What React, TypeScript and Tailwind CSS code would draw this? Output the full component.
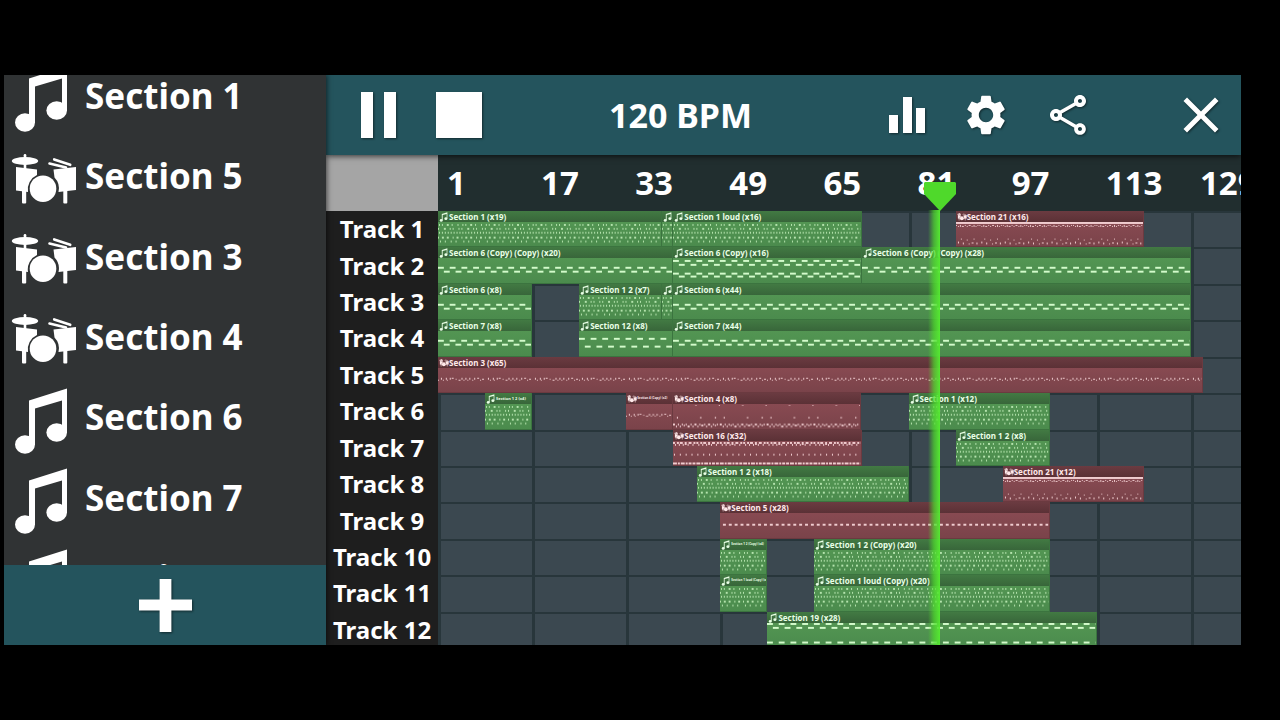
import React from 'react';
import { MdClose, MdOutlineShare, MdSettings } from 'react-icons/md';

type Kind = 'melody' | 'drums';

type PatternName =
  | 'arp'
  | 'bass'
  | 'double'
  | 'wide'
  | 'topline'
  | 'hats'
  | 'steady'
  | 'kick'
  | 'roll'
  | 'ride';

interface Section {
  name: string;
  kind: Kind;
}

interface Clip {
  start: number;
  length: number;
  label: string;
  pattern: PatternName;
  kind?: Kind;
  size?: string;
}

interface NotePattern {
  period: number;
  notes: number[][]; // [x, y, width, height]
}

// Number of two-bar steps that fit in the visible timeline
const VISIBLE_STEPS = 68.25;
// Note preview units per step
const STEP = 12;

const percent = (steps: number) => `${(steps / VISIBLE_STEPS) * 100}%`;

const sections: Section[] = [
  { name: 'Section 1', kind: 'melody' },
  { name: 'Section 5', kind: 'drums' },
  { name: 'Section 3', kind: 'drums' },
  { name: 'Section 4', kind: 'drums' },
  { name: 'Section 6', kind: 'melody' },
  { name: 'Section 7', kind: 'melody' },
  { name: 'Section 12', kind: 'melody' },
];

const bars = [1, 17, 33, 49, 65, 81, 97, 113, 129];

const patterns: Record<PatternName, NotePattern> = {
  arp: {
    period: 24,
    notes: [
      [1, 2, 1, 2], [4, 2, 1, 2], [9, 2, 2, 2], [14, 2, 1, 2], [20, 2, 1, 2],
      [0, 6, 1, 2], [6, 6, 2, 2], [12, 6, 1, 2], [15, 6, 1, 2], [21, 6, 1, 2],
      [1, 10, 1, 2], [4, 10, 1, 2], [7, 10, 1, 2], [10, 10, 1, 2], [13, 10, 1, 2], [16, 10, 1, 2], [19, 10, 1, 2], [22, 10, 1, 2],
      [0, 15, 1, 2], [4, 15, 2, 2], [9, 15, 2, 2], [15, 15, 1, 2], [19, 15, 2, 2],
      [2, 19, 1, 2], [7, 19, 1, 2], [13, 19, 1, 2], [18, 19, 1, 2],
    ],
  },
  bass: { period: 12, notes: [[0, 9, 6, 2], [6, 13, 6, 2]] },
  double: { period: 12, notes: [[0, 2, 6, 2], [6, 6, 6, 2], [0, 15, 6, 2], [6, 18, 6, 2]] },
  wide: { period: 12, notes: [[0, 7, 6, 2], [6, 15, 6, 2]] },
  topline: { period: 12, notes: [[0, 0, 6, 2], [6, 4, 6, 2], [0, 19, 6, 2]] },
  hats: {
    period: 48,
    notes: [
      [0, 12, 1, 1], [3, 10, 1, 2], [5, 12, 1, 1], [8, 10, 1, 2], [9, 12, 1, 1], [12, 10, 1, 2],
      [14, 10, 2, 1], [18, 11, 1, 1], [21, 12, 2, 1], [24, 10, 1, 2], [26, 12, 1, 1], [28, 10, 1, 2],
      [30, 12, 1, 1], [32, 10, 1, 2], [35, 12, 1, 1], [37, 10, 1, 2], [40, 10, 2, 1], [43, 12, 1, 1], [45, 11, 2, 1],
    ],
  },
  steady: { period: 6, notes: [[3, 11, 3, 2]] },
  kick: {
    period: 48,
    notes: [
      [23, 1, 1, 1], [47, 1, 1, 1], [4, 13, 1, 2], [28, 13, 1, 2], [43, 13, 1, 2],
      [0, 20, 2, 2], [3, 22, 1, 2], [5, 20, 1, 2], [7, 22, 1, 2], [9, 20, 1, 2], [11, 21, 1, 2], [13, 20, 1, 2],
      [15, 22, 2, 2], [18, 20, 1, 2], [20, 22, 1, 2], [22, 20, 2, 2], [25, 22, 1, 2], [27, 20, 1, 2], [29, 21, 2, 2],
      [32, 20, 1, 2], [34, 22, 1, 2], [36, 20, 2, 2], [39, 22, 1, 2], [41, 20, 1, 2], [43, 21, 1, 2], [45, 20, 1, 2],
    ],
  },
  roll: {
    period: 24,
    notes: [
      [0, 1, 2, 2], [2, 3, 1, 2], [4, 1, 2, 2], [6, 3, 1, 2], [7, 1, 3, 2], [10, 3, 1, 2], [12, 1, 2, 3],
      [15, 3, 1, 2], [16, 1, 3, 2], [20, 3, 1, 2], [21, 1, 2, 2],
      [1, 13, 1, 2], [7, 13, 1, 2], [13, 13, 1, 2], [19, 13, 1, 2],
      [0, 22, 4, 2], [5, 22, 2, 2], [8, 22, 4, 2], [13, 22, 2, 2], [16, 22, 3, 2], [20, 22, 3, 2],
    ],
  },
  ride: {
    period: 24,
    notes: [
      [0, 0, 24, 2], [0, 3, 1, 1], [2, 4, 1, 1], [4, 3, 1, 2], [6, 4, 2, 1], [9, 3, 1, 1], [11, 4, 1, 1],
      [13, 3, 2, 1], [16, 4, 1, 1], [18, 3, 1, 2], [20, 4, 1, 1], [22, 3, 1, 1],
      [2, 20, 1, 2], [5, 17, 1, 1], [7, 21, 1, 2], [11, 18, 1, 1], [13, 22, 1, 1], [16, 21, 2, 1], [18, 17, 1, 1], [21, 21, 1, 2],
    ],
  },
};

const tracks: Clip[][] = [
  [
    { start: 0, length: 19, label: 'Section 1 (x19)', pattern: 'arp' },
    { start: 19, length: 1, label: '', pattern: 'arp' },
    { start: 20, length: 16, label: 'Section 1 loud (x16)', pattern: 'arp' },
    { start: 44, length: 16, label: 'Section 21 (x16)', pattern: 'ride', kind: 'drums' },
  ],
  [
    { start: 0, length: 20, label: 'Section 6 (Copy) (Copy) (x20)', pattern: 'bass' },
    { start: 20, length: 16, label: 'Section 6 (Copy) (x16)', pattern: 'double' },
    { start: 36, length: 28, label: 'Section 6 (Copy) (Copy) (x28)', pattern: 'bass' },
  ],
  [
    { start: 0, length: 8, label: 'Section 6 (x8)', pattern: 'bass' },
    { start: 12, length: 7, label: 'Section 1 2 (x7)', pattern: 'arp' },
    { start: 19, length: 1, label: '', pattern: 'arp' },
    { start: 20, length: 44, label: 'Section 6 (x44)', pattern: 'bass' },
  ],
  [
    { start: 0, length: 8, label: 'Section 7 (x8)', pattern: 'bass' },
    { start: 12, length: 8, label: 'Section 12 (x8)', pattern: 'wide' },
    { start: 20, length: 44, label: 'Section 7 (x44)', pattern: 'bass' },
  ],
  [{ start: 0, length: 65, label: 'Section 3 (x65)', pattern: 'hats', kind: 'drums' }],
  [
    { start: 4, length: 4, label: 'Section 1 2 (x4)', pattern: 'arp', size: 'text-[4px]' },
    { start: 16, length: 4, label: 'Section 4 (Copy) (x2)', pattern: 'hats', kind: 'drums', size: 'text-[3px]' },
    { start: 20, length: 16, label: 'Section 4 (x8)', pattern: 'kick', kind: 'drums' },
    { start: 40, length: 12, label: 'Section 1 (x12)', pattern: 'arp' },
  ],
  [
    { start: 20, length: 16, label: 'Section 16 (x32)', pattern: 'roll', kind: 'drums' },
    { start: 44, length: 8, label: 'Section 1 2 (x8)', pattern: 'arp' },
  ],
  [
    { start: 22, length: 18, label: 'Section 1 2 (x18)', pattern: 'arp' },
    { start: 48, length: 12, label: 'Section 21 (x12)', pattern: 'ride', kind: 'drums' },
  ],
  [{ start: 24, length: 28, label: 'Section 5 (x28)', pattern: 'steady', kind: 'drums' }],
  [
    { start: 24, length: 4, label: 'Section 1 2 (Copy) (x4)', pattern: 'arp', size: 'text-[3px]' },
    { start: 32, length: 20, label: 'Section 1 2 (Copy) (x20)', pattern: 'arp' },
  ],
  [
    { start: 24, length: 4, label: 'Section 1 loud (Copy) (x4)', pattern: 'arp', size: 'text-[3px]' },
    { start: 32, length: 20, label: 'Section 1 loud (Copy) (x20)', pattern: 'arp' },
  ],
  [{ start: 28, length: 28, label: 'Section 19 (x28)', pattern: 'topline' }],
];

const NoteIcon: React.FC<{ className: string }> = ({ className }) => (
  <svg viewBox="0 0 68 72" className={className} fill="currentColor" aria-hidden="true">
    <path d="M19 18.5L57 6.5V51H52V18.5L25 26.5V63H19Z" />
    <ellipse cx="15" cy="62.5" rx="10" ry="9.2" />
    <ellipse cx="46.7" cy="50.5" rx="10.3" ry="9.2" />
  </svg>
);

const DrumsIcon: React.FC<{ className: string }> = ({ className }) => (
  <svg viewBox="0 0 68 72" className={className} fill="currentColor" aria-hidden="true">
    <ellipse cx="15" cy="20" rx="13.2" ry="3.9" />
    <rect x="13.7" y="13" width="2.6" height="16" rx="1.2" />
    <path d="M6 26L27 28.5V34A15.8 15.8 0 0 0 18 51L6 49.5Z" />
    <rect x="12" y="48" width="4.2" height="14.5" rx="1" />
    <circle cx="33" cy="47.7" r="13.3" />
    <path d="M43.5 28.5L66 26V49L48.5 51A15.8 15.8 0 0 0 44.5 36.5Z" />
    <rect x="53.3" y="48" width="4" height="14.5" rx="1" />
    <path d="M44.2 18.4L60.2 23.8M39.5 22.6L56 26.4" stroke="currentColor" strokeWidth="2.6" strokeLinecap="round" />
  </svg>
);

const ClipNotes: React.FC<{ id: string; length: number; pattern: PatternName; color: string }> = ({
  id,
  length,
  pattern,
  color,
}) => {
  const { period, notes } = patterns[pattern];
  return (
    <svg
      viewBox={`0 0 ${length * STEP} 25`}
      preserveAspectRatio="none"
      className={`block min-h-0 w-full flex-1 ${color}`}
      aria-hidden="true"
    >
      <defs>
        <pattern id={id} width={period} height="25" patternUnits="userSpaceOnUse">
          {notes.map(([x, y, w, h]) => (
            <rect key={`${x}-${y}`} x={x} y={y} width={w} height={h} fill="currentColor" />
          ))}
        </pattern>
      </defs>
      <rect width={length * STEP} height="25" fill={`url(#${id})`} />
    </svg>
  );
};

const ClipBlock: React.FC<{ clip: Clip; gap: number; id: string }> = ({ clip, gap, id }) => {
  const drums = clip.kind === 'drums';
  const Icon = drums ? DrumsIcon : NoteIcon;
  return (
    <div
      className={`flex h-full shrink-0 flex-col overflow-hidden border-r border-b ${
        drums
          ? 'border-[#6b3a40] bg-linear-to-b from-[#8e4d55] to-[#7a434a]'
          : 'border-[#3b743f] bg-linear-to-b from-[#569a55] to-[#4b8b4d]'
      }`}
      style={{ marginLeft: percent(gap), width: percent(clip.length) }}
    >
      <div
        className={`flex h-[11px] shrink-0 items-center pl-[1px] ${
          drums
            ? 'bg-linear-to-b from-[#6b3b41] to-[#5b3136] text-[#ffe9ea]'
            : 'bg-linear-to-b from-[#427a43] to-[#38663a] text-[#e9ffe6]'
        }`}
      >
        <Icon className="h-[11px] w-[10px] shrink-0" />
        <span className={`leading-[11px] font-bold whitespace-nowrap ${clip.size ?? 'text-[8px]'}`}>{clip.label}</span>
      </div>
      <ClipNotes
        id={id}
        length={clip.length}
        pattern={clip.pattern}
        color={drums ? 'text-[#f0cccf]' : clip.pattern === 'arp' ? 'text-[#b4e3ad]' : 'text-[#d3fbcb]'}
      />
    </div>
  );
};

const TrackRow: React.FC<{ clips: Clip[]; index: number }> = ({ clips, index }) => (
  <li className="relative flex min-h-0">
    {/* Grid cells behind the clips */}
    <div className="absolute inset-0 flex overflow-hidden" aria-hidden="true">
      {bars.map((bar) => (
        <div
          key={bar}
          className="shrink-0 border-t-2 border-l-3 border-[#28363b] bg-[#3b4850]"
          style={{ width: percent(8) }}
        />
      ))}
    </div>
    <div className="relative flex w-full">
      {clips.map((clip, i) => {
        const previous = clips[i - 1];
        const end = previous ? previous.start + previous.length : 0;
        return <ClipBlock key={clip.start} clip={clip} gap={clip.start - end} id={`notes-${index}-${i}`} />;
      })}
    </div>
  </li>
);

const Sidebar: React.FC = () => (
  <aside className="z-10 flex w-[322px] shrink-0 flex-col bg-[#303334] shadow-[1px_0_5px_rgba(0,0,0,0.6)]">
    <div className="min-h-0 flex-1 overflow-hidden">
      <ul className="-mt-[19px] grid h-[563px] grid-rows-7">
        {sections.map((section) => (
          <li key={section.name} className="min-h-0">
            <button type="button" className="flex h-full w-full items-center gap-[7px] pl-[6px] text-left">
              {section.kind === 'drums' ? (
                <DrumsIcon className="h-[72px] w-[68px] shrink-0" />
              ) : (
                <NoteIcon className="h-[72px] w-[68px] shrink-0" />
              )}
              <span className="pb-[1px] text-[35px] leading-[48px] font-bold">{section.name}</span>
            </button>
          </li>
        ))}
      </ul>
    </div>
    <button
      type="button"
      aria-label="Add section"
      className="flex h-[80px] shrink-0 items-center justify-center bg-[#24545d]"
    >
      <svg viewBox="0 0 54 54" className="size-[53px] drop-shadow-[1px_1px_1px_rgba(0,0,0,0.5)]" fill="currentColor">
        <path d="M21 0H33V21H54V32H33V54H21V32H0V21H21Z" />
      </svg>
    </button>
  </aside>
);

const Toolbar: React.FC = () => (
  <header className="z-5 flex h-[80px] shrink-0 items-center bg-[#24545d] pr-[10px] pl-[35px] shadow-[0_1px_6px_rgba(0,0,0,0.7)]">
    <button type="button" aria-label="Pause" className="drop-shadow-[1px_1px_1px_rgba(0,0,0,0.5)]">
      <svg viewBox="0 0 35 46" className="h-[46px] w-[35px]" fill="currentColor">
        <path d="M0 0H12V46H0ZM23 0H35V46H23Z" />
      </svg>
    </button>
    <button
      type="button"
      aria-label="Stop"
      className="ml-[40px] size-[46px] bg-white shadow-[1px_1px_2px_rgba(0,0,0,0.5)]"
    />
    <button type="button" className="ml-[127px] text-[34px] leading-[48px] font-bold whitespace-nowrap">
      120 BPM
    </button>
    <div className="ml-auto flex items-center drop-shadow-[1px_1px_1px_rgba(0,0,0,0.5)]">
      <button type="button" aria-label="Mixer">
        <svg viewBox="0 0 48 48" className="size-[48px]" fill="currentColor">
          <path d="M6 24H15V42H6ZM20 6H29V42H20ZM33 17H42V42H33Z" />
        </svg>
      </button>
      <button type="button" aria-label="Settings" className="ml-[31px]">
        <MdSettings className="size-[48px]" />
      </button>
      <button type="button" aria-label="Share" className="ml-[34px]">
        <MdOutlineShare className="size-[48px]" />
      </button>
      <button type="button" aria-label="Close" className="ml-[79px]">
        <MdClose className="size-[60px]" />
      </button>
    </div>
  </header>
);

const Playhead: React.FC = () => (
  <div className="absolute top-[27px] bottom-0 left-[62.5%] w-[32px] -translate-x-1/2">
    <div className="absolute top-[28px] bottom-0 left-[4px] w-[12px] bg-linear-to-r from-[#4fdd2d]/0 via-[#4fdd2d]/70 to-[#55e832]" />
    <svg viewBox="0 0 32 29" className="relative h-[29px] w-[32px]" fill="#4fd92b" aria-hidden="true">
      <path d="M1 0H31L32 1V12L16 29L0 12V1Z" />
    </svg>
  </div>
);

const Timeline: React.FC = () => (
  <div className="flex min-h-0 flex-1 overflow-hidden">
    <div className="flex w-[112px] shrink-0 flex-col bg-[#1e1e1e]">
      <div className="h-[56px] shrink-0 bg-[#a5a5a5]" />
      <ul className="grid h-[437px] shrink-0 grid-rows-12">
        {tracks.map((_, i) => (
          <li key={i} className="flex items-center justify-center text-[24px] leading-[36px] font-bold whitespace-nowrap">
            Track {i + 1}
          </li>
        ))}
      </ul>
    </div>
    <div className="relative flex min-w-0 flex-1 flex-col overflow-hidden">
      <div className="flex h-[56px] shrink-0 items-center bg-[#212e2f]">
        {bars.map((bar) => (
          <div
            key={bar}
            className="shrink-0 pl-[9px] text-[33px] leading-[48px] font-bold"
            style={{ width: percent(8) }}
          >
            {bar}
          </div>
        ))}
      </div>
      <ul className="grid h-[437px] shrink-0 grid-rows-12">
        {tracks.map((clips, i) => (
          <TrackRow key={i} clips={clips} index={i} />
        ))}
      </ul>
      <Playhead />
    </div>
  </div>
);

export default function App() {
  return (
    <div className="flex h-screen overflow-hidden bg-black py-[75px] pr-[39px] pl-[4px] font-['Noto_Sans','Open_Sans',sans-serif] text-white">
      <Sidebar />
      <main className="flex min-w-0 flex-1 flex-col overflow-hidden">
        <Toolbar />
        <Timeline />
      </main>
    </div>
  );
}
